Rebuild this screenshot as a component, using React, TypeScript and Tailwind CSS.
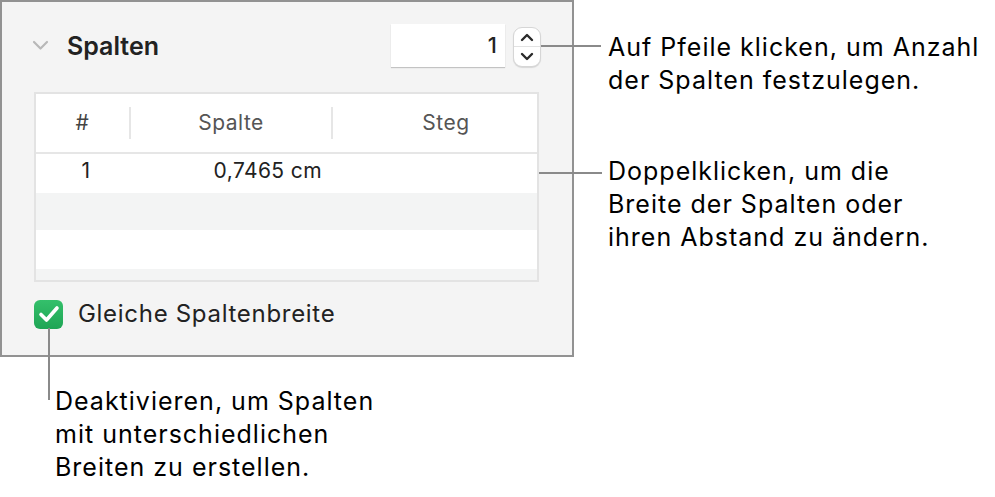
import React from 'react';

function Chevron({ dir, className }: { dir: 'up' | 'down'; className?: string }) {
  const d = dir === 'up' ? 'M2 7 L7 2 L12 7' : 'M2 2 L7 7 L12 2';
  return (
    <svg width="14" height="9" viewBox="0 0 14 9" className={className}>
      <path d={d} fill="none" stroke="currentColor" strokeWidth="2.4" strokeLinecap="round" strokeLinejoin="round" />
    </svg>
  );
}

function Stepper() {
  return (
    <div className="flex h-[40px] w-[28px] flex-col items-center self-end rounded-[9px] border border-[#d6d6d6] bg-white shadow-[0_1px_1px_rgba(0,0,0,0.12)]">
      <div className="flex h-1/2 w-full items-center justify-center border-b border-[#e2e2e2] text-[#2a2a2a]">
        <Chevron dir="up" />
      </div>
      <div className="flex h-1/2 w-full items-center justify-center text-[#2a2a2a]">
        <Chevron dir="down" />
      </div>
    </div>
  );
}

function ColumnsTable() {
  return (
    <div className="h-[190px] w-[505px] overflow-hidden border-2 border-[#e3e3e3] bg-white">
      <div className="flex h-[60px] items-center border-b-2 border-[#e6e6e6] text-[21px] tracking-[0.5px] text-[#555]">
        <div className="w-[93px] text-center text-[#444]">#</div>
        <div className="h-[32px] w-[2px] bg-[#e6e6e6]" />
        <div className="w-[200px] text-center">Spalte</div>
        <div className="h-[32px] w-[2px] bg-[#e6e6e6]" />
        <div className="flex-1 pl-[22px] text-center">Steg</div>
      </div>
      <div className="flex h-[39px] items-center pb-[5px] text-[21px] tracking-[0.4px] text-[#222]">
        <div className="w-[98px] pl-[2px] text-center">1</div>
        <div className="w-[188px] text-right">0,7465 cm</div>
      </div>
      <div className="h-[37px] bg-[#f3f4f4]" />
      <div className="h-[39px] bg-white" />
      <div className="h-[20px] bg-[#f3f4f4]" />
    </div>
  );
}

function Panel() {
  return (
    <div className="w-[574px] border-2 border-[#929292] bg-[#f4f4f4] pb-[27px] pl-[32px] pr-[31px] pt-[22px]">
      <div className="flex h-[43px] items-center">
        <svg width="17" height="11" viewBox="0 0 17 11" className="ml-[-2px] text-[#b8b8b8]">
          <path d="M2 2 L8.5 8.5 L15 2" fill="none" stroke="currentColor" strokeWidth="2.2" strokeLinecap="round" strokeLinejoin="round" />
        </svg>
        <span className="ml-[18px] mt-[2px] text-[25px] font-semibold text-[#222]">Spalten</span>
        <div className="ml-auto flex h-full items-center gap-[8px]">
          <div className="flex h-[43px] w-[114px] items-center justify-end bg-white pr-[8px] text-[22px] font-medium text-[#222] shadow-[0_1px_1px_rgba(0,0,0,0.2)]">
            1
          </div>
          <Stepper />
        </div>
      </div>
      <div className="mt-[25px]">
        <ColumnsTable />
      </div>
      <div className="mt-[18px] flex h-[28px] items-center">
        <div className="flex h-[29px] w-[29px] items-center justify-center rounded-[6px] bg-gradient-to-b from-[#34c06b] to-[#1ea555]">
          <svg width="22" height="18" viewBox="0 0 22 18">
            <path d="M3 9.5 L8.5 15 L19 3" fill="none" stroke="white" strokeWidth="3.6" strokeLinecap="round" strokeLinejoin="round" />
          </svg>
        </div>
        <span className="ml-[15px] text-[24px] tracking-[0.7px] text-[#222]">Gleiche Spaltenbreite</span>
      </div>
    </div>
  );
}

export default function App() {
  return (
    <div className="relative h-[497px] w-[995px] overflow-hidden bg-white font-['Inter','Liberation_Sans',sans-serif] text-black">
      <div className="flex">
        <div className="flex flex-col">
          <Panel />
          <p className="ml-[55px] mt-[28px] text-[25px] leading-[33px] tracking-[1px]">
            Deaktivieren, um Spalten
            <br />
            mit unterschiedlichen
            <br />
            Breiten zu erstellen.
          </p>
        </div>
        <div className="ml-[34px] flex flex-col text-[25px] leading-[33px] tracking-[1px]">
          <p className="mt-[31px]">
            Auf Pfeile klicken, um Anzahl
            <br />
            der Spalten festzulegen.
          </p>
          <p className="mt-[58px]">
            Doppelklicken, um die
            <br />
            Breite der Spalten oder
            <br />
            ihren Abstand zu ändern.
          </p>
        </div>
      </div>
      {/* leader lines */}
      <div className="absolute left-[541px] top-[45px] h-[2px] w-[60px] bg-[#8a8a8a]" />
      <div className="absolute left-[539px] top-[172px] h-[2px] w-[63px] bg-[#8a8a8a]" />
      <div className="absolute left-[48px] top-[328px] h-[72px] w-[2px] bg-[#8a8a8a]" />
    </div>
  );
}
